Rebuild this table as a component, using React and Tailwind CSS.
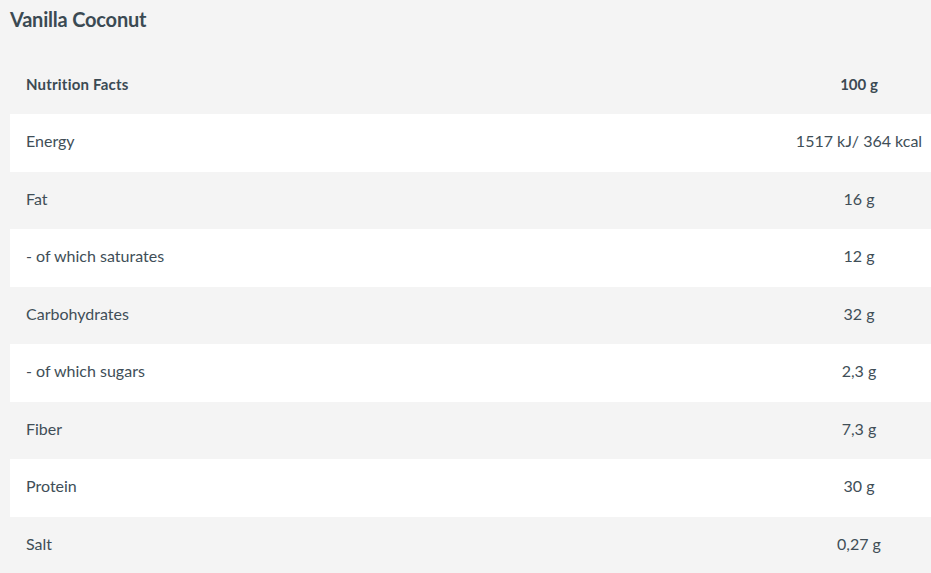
import React from 'react';

const rows = [
  ['Energy', '1517 kJ/ 364 kcal'],
  ['Fat', '16 g'],
  ['- of which saturates', '12 g'],
  ['Carbohydrates', '32 g'],
  ['- of which sugars', '2,3 g'],
  ['Fiber', '7,3 g'],
  ['Protein', '30 g'],
  ['Salt', '0,27 g'],
];

export default function App() {
  return (
    <div className="min-h-screen bg-[#f4f4f4] text-[#3b4a53] font-['Lato','Liberation_Sans',sans-serif]">
      <h1 className="px-[10px] pt-[7px] h-[56px] text-[20px] leading-[24px] font-bold tracking-[-0.2px]">Vanilla Coconut</h1>
      <div className="ml-[10px]">
        <div className="flex items-center h-[58px] pb-[2px] bg-[#f4f4f4] text-[15px] font-bold">
          <div className="flex-1 pl-4 tracking-[0.2px]">Nutrition Facts</div>
          <div className="w-[140px] mr-[2px] text-center">100 g</div>
        </div>
        {rows.map(([label, value], i) => (
          <div
            key={label}
            className={`flex items-center h-[57.5px] pb-[3px] text-[16px] text-[#404e57] ${i % 2 === 0 ? 'bg-white' : 'bg-[#f4f4f4]'}`}
          >
            <div className="flex-1 pl-4">{label}</div>
            <div className="w-[140px] mr-[2px] text-center whitespace-nowrap">{value}</div>
          </div>
        ))}
      </div>
    </div>
  );
}
